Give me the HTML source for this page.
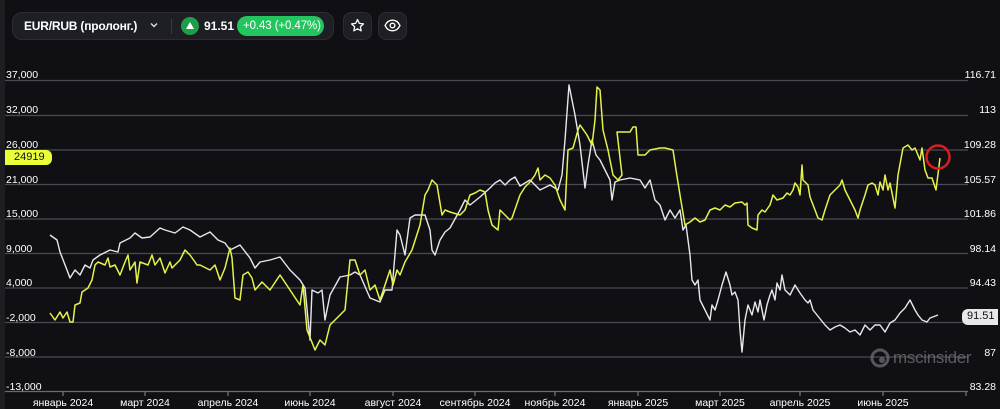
<!DOCTYPE html>
<html><head><meta charset="utf-8"><style>
html,body{margin:0;padding:0;background:#101014;width:1000px;height:409px;overflow:hidden;font-family:"Liberation Sans",sans-serif;color:#fff}
.strip{position:absolute;left:0;top:0;width:5px;height:409px;background:#1d1e22}
.pill{position:absolute;left:12px;top:12px;width:322px;height:28px;border-radius:10px;background:#1e1f24;border:1px solid #2c2d33;box-sizing:border-box}
.btn{position:absolute;top:12px;width:29px;height:28px;border-radius:8px;background:#1e1f24;border:1px solid #2c2d33;box-sizing:border-box}
.t{position:absolute;font-size:12px;font-weight:bold;white-space:nowrap}
.yl{position:absolute;left:6px;font-size:10.5px;color:#fff}
.yr{position:absolute;right:4px;font-size:10.5px;color:#fff;text-align:right}
.xl{position:absolute;top:397px;font-size:10.5px;color:#fff;transform:translateX(-50%);white-space:nowrap}
</style></head><body>
<div class="strip"></div>
<div class="pill"></div>
<div class="t" style="left:24px;top:19px;letter-spacing:-0.2px">EUR/RUB (пролонг.)</div>
<svg style="position:absolute;left:150px;top:22px" width="8" height="6"><path d="M1 1.5L4 4.5L7 1.5" stroke="#ddd" stroke-width="1.4" fill="none"/></svg>
<div style="position:absolute;left:171px;top:19px;width:1px;height:15px;background:#3a3b40"></div>
<div style="position:absolute;left:181px;top:17px;width:18px;height:18px;border-radius:50%;background:#1f9d4a"></div>
<svg style="position:absolute;left:185px;top:21px" width="10" height="9"><path d="M5 1L9 8H1Z" fill="#fff"/></svg>
<div class="t" style="left:204px;top:19px">91.51</div>
<div style="position:absolute;left:237px;top:16px;width:87px;height:20px;border-radius:10px;background:#22c55e"></div>
<div style="position:absolute;left:243px;top:19.5px;font-size:11.5px;color:#fff;white-space:nowrap;letter-spacing:-0.1px">+0.43 (+0.47%)</div>
<div class="btn" style="left:343px"></div>
<svg style="position:absolute;left:350px;top:18px" width="15" height="15" viewBox="0 0 24 24"><path d="M12 2.5l2.9 6.1 6.6.8-4.9 4.6 1.3 6.6L12 17.3l-5.9 3.3 1.3-6.6L2.5 9.4l6.6-.8z" fill="none" stroke="#fff" stroke-width="2" stroke-linejoin="round"/></svg>
<div class="btn" style="left:378px"></div>
<svg style="position:absolute;left:384px;top:18px" width="17" height="15" viewBox="0 0 24 20"><path d="M1.5 10C4 4.5 8 2.5 12 2.5S20 4.5 22.5 10C20 15.5 16 17.5 12 17.5S4 15.5 1.5 10Z" fill="none" stroke="#fff" stroke-width="2"/><circle cx="12" cy="10" r="3.3" fill="none" stroke="#fff" stroke-width="2"/></svg>

<svg style="position:absolute;left:0;top:0" width="1000" height="409">
<g stroke="#4a4b50" stroke-width="1.3">
<line x1="5" x2="968" y1="80.5" y2="80.5"/><line x1="5" x2="968" y1="115.5" y2="115.5"/><line x1="5" x2="968" y1="150" y2="150"/><line x1="5" x2="968" y1="184.5" y2="184.5"/><line x1="5" x2="968" y1="219" y2="219"/><line x1="5" x2="968" y1="253.5" y2="253.5"/><line x1="5" x2="968" y1="288" y2="288"/><line x1="5" x2="968" y1="322.5" y2="322.5"/><line x1="5" x2="968" y1="357" y2="357"/>
</g>
<line x1="5" x2="968" y1="391.5" y2="391.5" stroke="#6a6b70" stroke-width="1.3"/>
<g stroke="#8a8b90" stroke-width="1"><line x1="63" x2="63" y1="392" y2="396"/><line x1="145" x2="145" y1="392" y2="396"/><line x1="228" x2="228" y1="392" y2="396"/><line x1="310" x2="310" y1="392" y2="396"/><line x1="393" x2="393" y1="392" y2="396"/><line x1="475" x2="475" y1="392" y2="396"/><line x1="555" x2="555" y1="392" y2="396"/><line x1="638" x2="638" y1="392" y2="396"/><line x1="720" x2="720" y1="392" y2="396"/><line x1="800" x2="800" y1="392" y2="396"/><line x1="883" x2="883" y1="392" y2="396"/><line x1="966" x2="966" y1="392" y2="396"/></g>
<polyline fill="none" stroke="#e8e8ec" stroke-width="1.4" stroke-linejoin="round" points="50,235 57,240 60,252 67,270 70,278 75,270 80,275 85,265 90,268 93,260 100,255 110,250 118,252 120,243 130,238 135,233 142,238 150,237 160,228 165,230 175,233 183,227 190,230 200,237 210,232 218,240 225,243 230,250 240,245 250,258 255,268 260,262 270,260 280,257 290,270 300,280 305,288 310,340 312,290 318,293 322,290 325,320 330,295 340,277 350,275 355,272 360,275 370,298 375,300 380,302 385,290 392,290 397,230 400,235 405,255 410,218 415,215 420,215 425,215 430,230 432,250 435,255 440,240 445,232 450,228 460,210 465,200 470,205 480,197 490,188 495,183 500,180 505,185 510,180 515,177 520,186 530,180 540,190 550,185 558,190 562,175 565,140 569,85 572,100 575,115 580,145 585,188 588,165 592,140 596,155 600,160 606,172 610,180 612,200 615,182 620,180 630,178 640,180 645,188 650,180 655,200 660,205 665,220 670,210 675,218 680,210 683,230 686,225 690,255 692,280 695,285 698,280 700,300 705,310 710,320 712,305 715,310 718,300 722,285 726,272 730,285 732,295 735,292 738,300 740,330 742,352 745,320 748,305 752,315 755,302 758,312 760,300 764,320 767,305 770,295 772,290 775,300 777,283 780,290 782,275 785,290 790,295 795,285 800,293 805,300 808,303 810,300 813,310 825,325 830,330 835,327 840,325 845,328 850,332 855,330 860,335 865,325 870,330 875,325 880,325 885,332 890,323 895,320 900,313 905,308 910,300 915,310 918,315 922,320 927,322 930,318 938,315"/>
<polyline fill="none" stroke="#e6f24a" stroke-width="1.5" stroke-linejoin="round" points="50,313 55,320 60,312 63,318 67,312 70,322 73,322 75,305 80,303 82,292 88,288 92,280 95,265 98,262 105,265 108,258 110,267 115,265 120,275 125,262 128,255 130,270 135,262 137,283 140,262 148,265 152,255 155,265 160,258 165,273 170,262 172,268 175,265 180,260 185,250 190,255 195,262 197,265 200,265 210,270 215,265 220,280 225,268 230,248 232,258 235,298 240,300 243,275 248,272 252,278 255,290 262,282 270,290 280,275 290,290 300,305 303,285 307,330 315,350 320,340 325,345 330,325 335,320 340,315 345,310 350,260 355,260 360,275 365,270 370,290 375,285 380,300 385,285 390,270 393,285 397,270 400,275 405,262 412,250 420,225 425,195 428,190 432,180 437,185 442,215 445,210 450,212 460,215 465,210 470,195 475,193 480,190 485,192 488,210 492,225 498,230 500,210 505,215 510,220 512,218 520,195 525,187 530,182 535,175 538,168 540,180 545,175 550,178 555,185 560,200 565,210 568,150 573,148 578,130 580,125 587,135 592,145 595,120 597,87 600,90 603,130 608,150 613,175 618,180 622,175 617,132 630,132 633,127 636,127 638,155 645,155 650,150 660,148 665,148 673,150 676,170 680,195 685,225 690,222 695,218 700,222 705,220 710,210 715,208 720,210 725,205 730,207 735,203 742,202 745,205 747,203 748,225 752,228 757,230 758,215 762,210 765,212 770,205 773,195 777,200 783,198 787,193 790,195 793,190 795,183 798,187 800,195 802,165 803,180 808,185 810,197 815,210 818,218 822,220 825,210 830,195 835,190 840,185 842,180 845,190 850,200 855,210 858,218 860,210 865,195 868,185 872,183 875,185 878,195 880,182 883,190 885,175 888,190 890,183 895,208 898,175 903,148 908,145 912,150 915,148 918,155 920,160 922,148 925,170 928,178 932,178 936,190 940,158"/>
<circle cx="938" cy="157" r="11.5" fill="none" stroke="#d81e1e" stroke-width="2.5"/>
<g fill="#6e6f74" opacity="0.75"><circle cx="880" cy="358" r="8" fill="none" stroke="#6e6f74" stroke-width="3"/><circle cx="882" cy="360" r="3"/></g>
</svg>
<div style="position:absolute;left:893px;top:348px;font-size:17px;color:#6e6f74;opacity:.8;letter-spacing:-0.3px">mscinsider</div>

<div class="yl" style="top:69px">37,000</div>
<div class="yl" style="top:104px">32,000</div>
<div class="yl" style="top:139px">26,000</div>
<div class="yl" style="top:174px">21,000</div>
<div class="yl" style="top:208px">15,000</div>
<div class="yl" style="top:243px">9,000</div>
<div class="yl" style="top:277px">4,000</div>
<div class="yl" style="top:312px">-2,000</div>
<div class="yl" style="top:347px">-8,000</div>
<div class="yl" style="top:381px">-13,000</div>
<div style="position:absolute;left:5px;top:150px;width:47px;height:15px;background:#eaff3a;border-radius:0 6px 6px 0"></div>
<div style="position:absolute;left:14px;top:151px;font-size:11px;color:#111">24919</div>

<div class="yr" style="top:69px">116.71</div>
<div class="yr" style="top:104px">113</div>
<div class="yr" style="top:139px">109.28</div>
<div class="yr" style="top:174px">105.57</div>
<div class="yr" style="top:208px">101.86</div>
<div class="yr" style="top:243px">98.14</div>
<div class="yr" style="top:277px">94.43</div>
<div style="position:absolute;left:962px;top:309px;width:36px;height:16px;background:#e8e8ea;border-radius:6px 0 0 6px"></div>
<div style="position:absolute;left:967px;top:310px;font-size:11px;color:#111">91.51</div>
<div class="yr" style="top:347px">87</div>
<div class="yr" style="top:381px">83.28</div>

<div class="xl" style="left:63px">январь 2024</div>
<div class="xl" style="left:145px">март 2024</div>
<div class="xl" style="left:228px">апрель 2024</div>
<div class="xl" style="left:310px">июнь 2024</div>
<div class="xl" style="left:393px">август 2024</div>
<div class="xl" style="left:475px">сентябрь 2024</div>
<div class="xl" style="left:555px">ноябрь 2024</div>
<div class="xl" style="left:638px">январь 2025</div>
<div class="xl" style="left:720px">март 2025</div>
<div class="xl" style="left:800px">апрель 2025</div>
<div class="xl" style="left:883px">июнь 2025</div>
</body></html>
